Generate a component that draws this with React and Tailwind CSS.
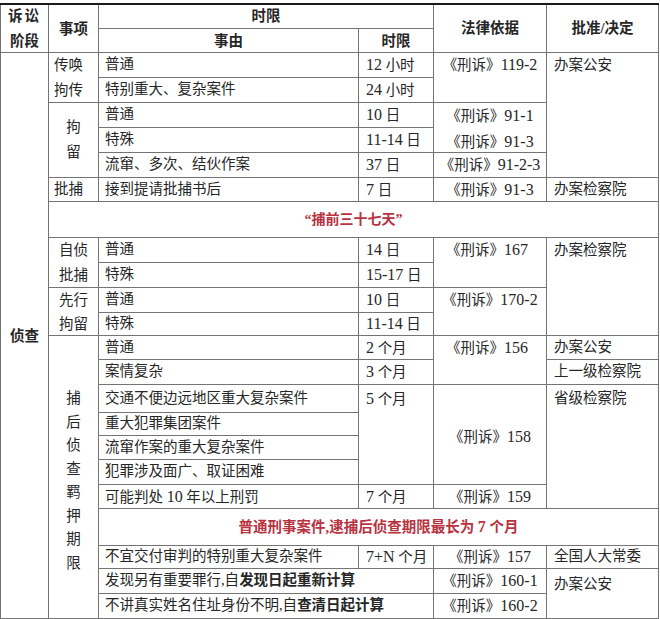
import React from "react";

const F = { fontFamily: '"Liberation Serif", "Noto Sans CJK SC", serif' };

function T({ children }) {
  if (typeof children !== "string") return children;
  const parts = children.split(/([0-9A-Za-z+\-]+)/);
  return (
    <span className="whitespace-pre">
      {parts.map((p, i) =>
        /[0-9A-Za-z]/.test(p) ? (
          <span key={i} className="text-[16px]">{p}</span>
        ) : (
          <React.Fragment key={i}>{p}</React.Fragment>
        )
      )}
    </span>
  );
}

function C({ className = "", children }) {
  const kids = React.Children.map(children, (ch) => (typeof ch === "string" ? <T>{ch}</T> : ch));
  return <div className={"bg-white flex overflow-hidden " + className}>{kids}</div>;
}

export default function App() {
  return (
    <div className="w-[660px] h-[619px] bg-white text-[#262626] text-[14.5px]" style={F}>
      <div className="mt-[3px] w-[659px] grid gap-px bg-[#747474] border-t-2 border-[#1a1a1a] px-px pb-px grid-cols-[47px_49px_259px_74px_112px_111px] grid-rows-[23px_23px_24px_24px_24px_24px_24px_23px_35px_24px_24px_24px_22px_23px_24px_27px_22px_23px_24px_23px_36px_22px_24px_24px]">
        {/* header */}
        <C className="col-start-1 row-start-1 row-span-2 flex-col items-center justify-center font-bold leading-[25px] pt-[1px]">
          <span className="tracking-[2px]">诉讼</span>
          <span>阶段</span>
        </C>
        <C className="col-start-2 row-start-1 row-span-2 items-center justify-center font-bold pt-[2px]">事项</C>
        <C className="col-start-3 col-span-2 row-start-1 items-center justify-center font-bold">时限</C>
        <C className="col-start-3 row-start-2 items-center justify-center font-bold pt-[2px]">事由</C>
        <C className="col-start-4 row-start-2 items-center justify-center font-bold pt-[2px]">时限</C>
        <C className="col-start-5 row-start-1 row-span-2 items-center justify-center font-bold">法律依据</C>
        <C className="col-start-6 row-start-1 row-span-2 items-center justify-center font-bold">批准/决定</C>

        {/* stage */}
        <C className="col-start-1 row-start-3 row-span-22 items-center justify-center font-bold pt-[2px]">侦查</C>

        {/* 传唤 拘传 */}
        <C className="col-start-2 row-start-3 row-span-2 flex-col justify-center pl-[5px] leading-[25px]">
          <span>传唤</span>
          <span>拘传</span>
        </C>
        <C className="col-start-3 row-start-3 items-center pl-[6px]">普通</C>
        <C className="col-start-4 row-start-3 items-center pl-[7px]">12 小时</C>
        <C className="col-start-5 row-start-3 row-span-2 justify-center items-start leading-[24px]">《刑诉》119-2</C>
        <C className="col-start-6 row-start-3 row-span-5 items-start pl-[7px] leading-[24px]">办案公安</C>
        <C className="col-start-3 row-start-4 items-center pl-[6px]">特别重大、复杂案件</C>
        <C className="col-start-4 row-start-4 items-center pl-[7px]">24 小时</C>

        {/* 拘留 */}
        <C className="col-start-2 row-start-5 row-span-3 flex-col items-center justify-center leading-[25px]">
          <span>拘</span>
          <span>留</span>
        </C>
        <C className="col-start-3 row-start-5 items-center pl-[6px]">普通</C>
        <C className="col-start-4 row-start-5 items-center pl-[7px]">10 日</C>
        <C className="col-start-5 row-start-5 row-span-2 flex-col items-center justify-start leading-[25px]">
          <T>《刑诉》91-1</T>
          <T>《刑诉》91-3</T>
        </C>
        <C className="col-start-3 row-start-6 items-center pl-[6px]">特殊</C>
        <C className="col-start-4 row-start-6 items-center pl-[7px]">11-14 日</C>
        <C className="col-start-3 row-start-7 items-center pl-[6px]">流窜、多次、结伙作案</C>
        <C className="col-start-4 row-start-7 items-center pl-[7px]">37 日</C>
        <C className="col-start-5 row-start-7 items-center justify-center">《刑诉》91-2-3</C>

        {/* 批捕 */}
        <C className="col-start-2 row-start-8 items-center pl-[5px]">批捕</C>
        <C className="col-start-3 row-start-8 items-center pl-[6px]">接到提请批捕书后</C>
        <C className="col-start-4 row-start-8 items-center pl-[7px]">7 日</C>
        <C className="col-start-5 row-start-8 items-center justify-center">《刑诉》91-3</C>
        <C className="col-start-6 row-start-8 items-center pl-[7px]">办案检察院</C>

        {/* red 1 */}
        <C className="col-start-2 col-span-5 row-start-9 items-center justify-center text-[#b8323f] font-semibold text-[14px]">
          “捕前三十七天”
        </C>

        {/* 自侦批捕 */}
        <C className="col-start-2 row-start-10 row-span-2 flex-col items-center justify-center leading-[25px]">
          <span>自侦</span>
          <span>批捕</span>
        </C>
        <C className="col-start-3 row-start-10 items-center pl-[6px]">普通</C>
        <C className="col-start-4 row-start-10 items-center pl-[7px]">14 日</C>
        <C className="col-start-5 row-start-10 row-span-2 justify-center items-start leading-[24px] pr-[6px]">《刑诉》167</C>
        <C className="col-start-6 row-start-10 row-span-4 items-start pl-[7px] leading-[24px]">办案检察院</C>
        <C className="col-start-3 row-start-11 items-center pl-[6px]">特殊</C>
        <C className="col-start-4 row-start-11 items-center pl-[7px]">15-17 日</C>

        {/* 先行拘留 */}
        <C className="col-start-2 row-start-12 row-span-2 flex-col items-center justify-center leading-[24px]">
          <span>先行</span>
          <span>拘留</span>
        </C>
        <C className="col-start-3 row-start-12 items-center pl-[6px]">普通</C>
        <C className="col-start-4 row-start-12 items-center pl-[7px]">10 日</C>
        <C className="col-start-5 row-start-12 row-span-2 justify-center items-start leading-[24px]">《刑诉》170-2</C>
        <C className="col-start-3 row-start-13 items-center pl-[6px]">特殊</C>
        <C className="col-start-4 row-start-13 items-center pl-[7px]">11-14 日</C>

        {/* 捕后侦查羁押期限 */}
        <C className="col-start-2 row-start-14 row-span-11 flex-col items-center justify-center leading-[23.5px] pt-[8px]">
          <span>捕</span>
          <span>后</span>
          <span>侦</span>
          <span>查</span>
          <span>羁</span>
          <span>押</span>
          <span>期</span>
          <span>限</span>
        </C>
        <C className="col-start-3 row-start-14 items-center pl-[6px]">普通</C>
        <C className="col-start-4 row-start-14 items-center pl-[7px]">2 个月</C>
        <C className="col-start-5 row-start-14 row-span-2 justify-center items-start leading-[23px] pr-[6px]">《刑诉》156</C>
        <C className="col-start-6 row-start-14 items-center pl-[7px]">办案公安</C>
        <C className="col-start-3 row-start-15 items-center pl-[6px]">案情复杂</C>
        <C className="col-start-4 row-start-15 items-center pl-[7px]">3 个月</C>
        <C className="col-start-6 row-start-15 items-center pl-[7px]">上一级检察院</C>

        <C className="col-start-3 row-start-16 items-center pl-[6px]">交通不便边远地区重大复杂案件</C>
        <C className="col-start-4 row-start-16 row-span-4 items-start pl-[7px] leading-[27px]">5 个月</C>
        <C className="col-start-5 row-start-16 row-span-4 items-center justify-center pt-[5px]">《刑诉》158</C>
        <C className="col-start-6 row-start-16 row-span-5 items-start pl-[7px] leading-[27px]">省级检察院</C>
        <C className="col-start-3 row-start-17 items-center pl-[6px]">重大犯罪集团案件</C>
        <C className="col-start-3 row-start-18 items-center pl-[6px]">流窜作案的重大复杂案件</C>
        <C className="col-start-3 row-start-19 items-center pl-[6px]">犯罪涉及面广、取证困难</C>
        <C className="col-start-3 row-start-20 items-center pl-[6px]">可能判处 10 年以上刑罚</C>
        <C className="col-start-4 row-start-20 items-center pl-[7px]">7 个月</C>
        <C className="col-start-5 row-start-20 items-center justify-center">《刑诉》159</C>

        {/* red 2 */}
        <C className="col-start-3 col-span-4 row-start-21 items-center justify-center text-[#b8323f] font-semibold text-[14.5px]">
          普通刑事案件,逮捕后侦查期限最长为 7 个月
        </C>

        <C className="col-start-3 row-start-22 items-center pl-[6px]">不宜交付审判的特别重大复杂案件</C>
        <C className="col-start-4 row-start-22 items-center pl-[7px]">7+N 个月</C>
        <C className="col-start-5 row-start-22 items-center justify-center">《刑诉》157</C>
        <C className="col-start-6 row-start-22 items-center pl-[7px]">全国人大常委</C>

        <C className="col-start-3 col-span-2 row-start-23 items-center pl-[6px]">
          <span>
            发现另有重要罪行,自<b className="font-bold">发现日起重新计算</b>
          </span>
        </C>
        <C className="col-start-5 row-start-23 items-center justify-center">《刑诉》160-1</C>
        <C className="col-start-6 row-start-23 row-span-2 items-start pl-[7px] pt-[3px] leading-[24px]">办案公安</C>
        <C className="col-start-3 col-span-2 row-start-24 items-center pl-[6px]">
          <span>
            不讲真实姓名住址身份不明,自<b className="font-bold">查清日起计算</b>
          </span>
        </C>
        <C className="col-start-5 row-start-24 items-center justify-center">《刑诉》160-2</C>
      </div>
    </div>
  );
}
